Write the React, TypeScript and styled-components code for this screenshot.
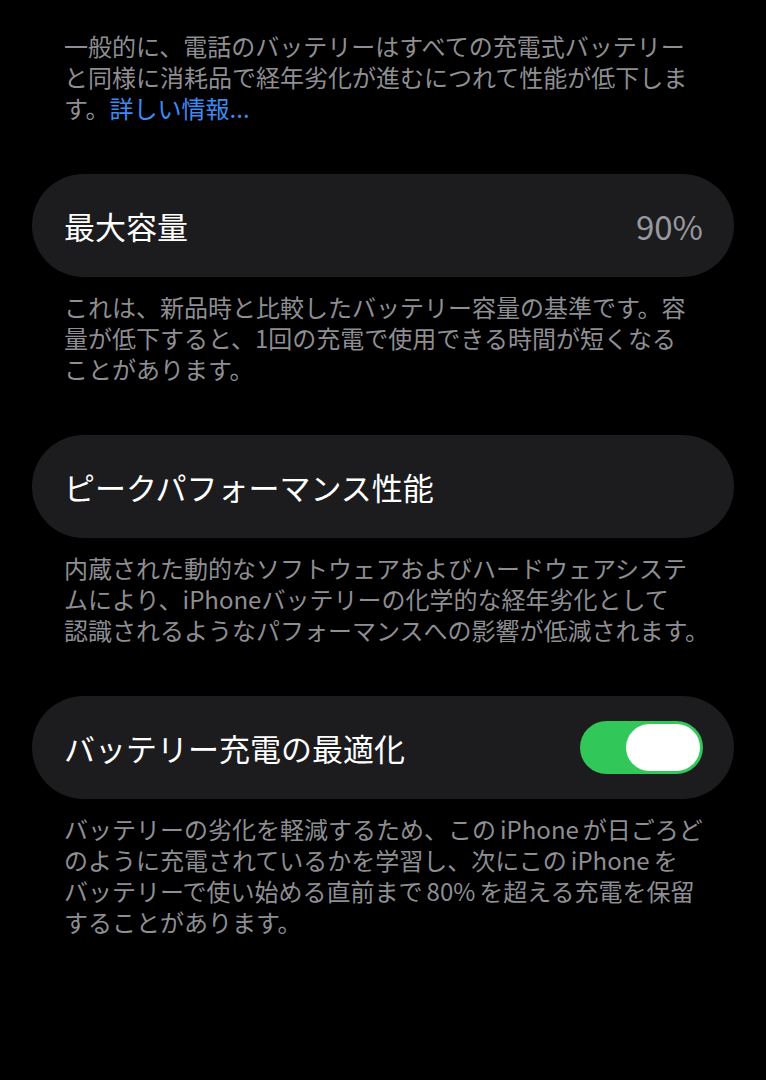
import React from 'react';
import styled, { createGlobalStyle } from 'styled-components';

const GlobalStyle = createGlobalStyle`
  html, body {
    margin: 0;
    padding: 0;
    background: #000;
  }
  body {
    font-family: "Noto Sans CJK JP", "Noto Sans", sans-serif;
    -webkit-font-smoothing: antialiased;
  }
`;

// Whole scroll view
const Page = styled.div`
  min-height: 1080px;
  padding: 30px 32px 0 32px;
  box-sizing: border-box;
  display: flex;
  flex-direction: column;
  gap: 51px;
`;

// One grouped setting plus its explanation
const Section = styled.section`
  display: flex;
  flex-direction: column;
  gap: 14px;
`;

// Grey explanatory text below / above cards
const Footnote = styled.p`
  margin: 0;
  padding: 0 0 0 32px;
  color: #8e8e93;
  font-size: 24px;
  line-height: 31px;
  font-weight: 400;
  white-space: nowrap;
`;

const Latin = styled.span`
  margin: 0 4px;
`;

const Link = styled.span`
  color: #3d8bf2;
`;

// Rounded setting row
const Card = styled.div`
  height: 103px;
  border-radius: 52px;
  background: #1c1c1e;
  display: flex;
  align-items: center;
  justify-content: space-between;
  padding: 0 31px 0 32px;
  box-sizing: border-box;
`;

const Label = styled.span`
  color: #fff;
  font-size: 31px;
  font-weight: 400;
`;

const Value = styled.span`
  color: #98989f;
  font-size: 33px;
  font-weight: 400;
`;

// iOS switch
const Toggle = styled.div<{ $on: boolean }>`
  width: 123px;
  height: 53px;
  border-radius: 27px;
  background: ${({ $on }) => ($on ? '#32c759' : '#39393d')};
  display: flex;
  align-items: center;
  justify-content: ${({ $on }) => ($on ? 'flex-end' : 'flex-start')};
  padding: 0 3px;
  box-sizing: border-box;
`;

const Knob = styled.div`
  width: 74px;
  height: 47px;
  border-radius: 24px;
  background: #fff;
`;

const App: React.FC = () => {
  return (
    <>
      <GlobalStyle />
      <Page>
        <Footnote>
          一般的に、電話のバッテリーはすべての充電式バッテリー
          <br />
          と同様に消耗品で経年劣化が進むにつれて性能が低下しま
          <br />
          す。<Link>詳しい情報...</Link>
        </Footnote>

        <Section>
          <Card>
            <Label>最大容量</Label>
            <Value>90%</Value>
          </Card>
          <Footnote>
            これは、新品時と比較したバッテリー容量の基準です。容
            <br />
            量が低下すると、1回の充電で使用できる時間が短くなる
            <br />
            ことがあります。
          </Footnote>
        </Section>

        <Section>
          <Card>
            <Label>ピークパフォーマンス性能</Label>
          </Card>
          <Footnote>
            内蔵された動的なソフトウェアおよびハードウェアシステ
            <br />
            ムにより、iPhoneバッテリーの化学的な経年劣化として
            <br />
            認識されるようなパフォーマンスへの影響が低減されます。
          </Footnote>
        </Section>

        <Section>
          <Card>
            <Label>バッテリー充電の最適化</Label>
            <Toggle $on>
              <Knob />
            </Toggle>
          </Card>
          <Footnote>
            バッテリーの劣化を軽減するため、この<Latin>iPhone</Latin>が日ごろど
            <br />
            のように充電されているかを学習し、次にこの<Latin>iPhone</Latin>を
            <br />
            バッテリーで使い始める直前まで<Latin>80%</Latin>を超える充電を保留
            <br />
            することがあります。
          </Footnote>
        </Section>
      </Page>
    </>
  );
};

export default App;
